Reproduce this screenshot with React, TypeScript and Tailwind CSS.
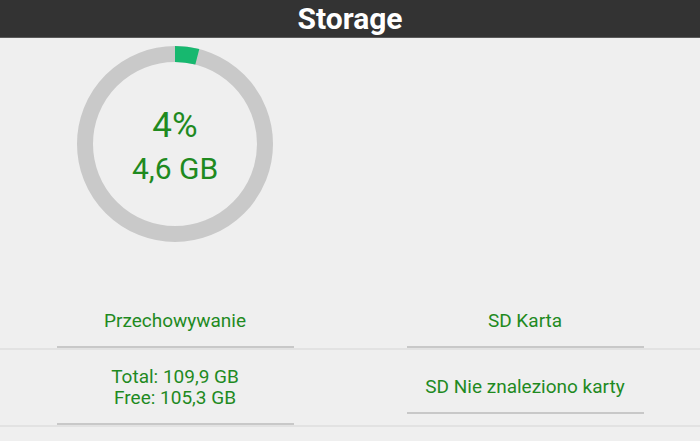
import React from "react";

const R = 90;
const C = 2 * Math.PI * R;

export default function App() {
  const pct = 0.04;
  return (
    <div className="w-[700px] h-[441px] overflow-hidden bg-[#efefef] font-['Roboto',sans-serif]">
      <div className="h-[38px] bg-[#333333] border-b border-[#5a5a5a] flex items-center justify-center">
        <span className="text-white font-bold text-[30px] leading-[38px]">Storage</span>
      </div>
      <div className="h-[252px] grid grid-cols-2">
        <div className="flex justify-center pt-[8px]">
          <div className="relative w-[196px] h-[196px]">
            <svg width="196" height="196" viewBox="0 0 196 196">
              <circle cx="98" cy="98" r={R} fill="none" stroke="#c9c9c9" strokeWidth="16" />
              <circle
                cx="98"
                cy="98"
                r={R}
                fill="none"
                stroke="#17b86f"
                strokeWidth="16"
                strokeDasharray={`${C * pct} ${C}`}
                transform="rotate(-90 98 98)"
              />
            </svg>
            <div className="absolute inset-0 flex flex-col items-center pt-[60px] text-[#1f8a1f]">
              <div className="text-[35px] leading-[40px]">4%</div>
              <div className="text-[30px] leading-[40px] mt-[3px]">4,6 GB</div>
            </div>
          </div>
        </div>
        <div />
      </div>
      <div className="grid grid-cols-2 border-b-2 border-[#e2e2e2]">
        <div className="flex flex-col items-center">
          <div className="pt-[19px] pb-[13px] text-[19px] leading-[24px] text-[#1f8a1f]">Przechowywanie</div>
          <div className="w-[237px] h-[2px] bg-[#c8c8c8]" />
        </div>
        <div className="flex flex-col items-center">
          <div className="pt-[19px] pb-[13px] text-[19px] leading-[24px] text-[#1f8a1f]">SD Karta</div>
          <div className="w-[237px] h-[2px] bg-[#c8c8c8]" />
        </div>
      </div>
      <div className="grid grid-cols-2 border-b-2 border-[#e2e2e2]">
        <div className="flex flex-col items-center">
          <div className="pt-[16px] pb-[15px] text-[19px] leading-[21px] text-[#1f8a1f] text-center">
            <div>Total: 109,9 GB</div>
            <div>Free: 105,3 GB</div>
          </div>
          <div className="w-[237px] h-[2px] bg-[#c8c8c8]" />
        </div>
        <div className="flex flex-col items-center">
          <div className="pt-[25px] pb-[13px] text-[19px] leading-[24px] text-[#1f8a1f]">SD Nie znaleziono karty</div>
          <div className="w-[237px] h-[2px] bg-[#c8c8c8]" />
        </div>
      </div>
    </div>
  );
}
